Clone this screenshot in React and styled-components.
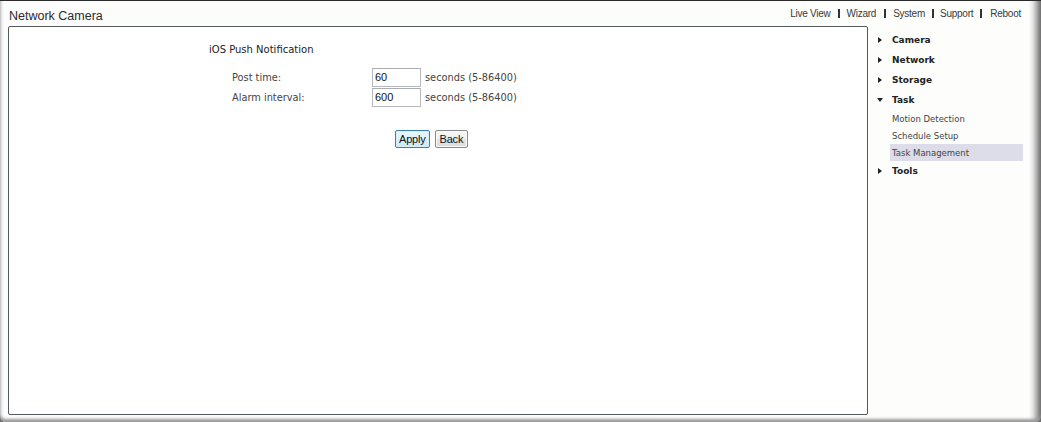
import React from 'react';
import styled, { createGlobalStyle } from 'styled-components';

const GlobalStyle = createGlobalStyle`
  html, body {
    margin: 0;
    padding: 0;
    background: #6e6e6e;
  }
`;

// outer frame with the shaded window edges
const Frame = styled.div`
  box-sizing: border-box;
  width: 1041px;
  height: 422px;
  border-top: 1px solid #2a2a2a;
  background: linear-gradient(to right, #c8c8c8 0, #efefef 2px, #fcfcfc 4px, #fdfefb 1029px, #e2e2e2 1033px, #a9a9a9 1037px, #6a6a6a 1041px);
  border-radius: 0 0 6px 6px;
  padding: 0 8px 0 8px;
  display: flex;
  flex-direction: column;
  box-shadow: inset 0 -4px 3px -1px #9a9a9a;
`;

const Header = styled.header`
  display: flex;
  justify-content: space-between;
  align-items: center;
  height: 25px;
`;

const Title = styled.div`
  font-family: 'Liberation Sans', Arial, sans-serif;
  font-size: 12.5px;
  color: #2b2b2b;
  padding-left: 1px;
  padding-top: 5px;
`;

const TopNav = styled.nav`
  display: flex;
  align-items: center;
  font-family: 'Liberation Sans', Arial, sans-serif;
  font-size: 10px;
  letter-spacing: -0.25px;
  color: #3a3a3a;
  padding-right: 12px;
  padding-bottom: 1px;
`;

const NavLink = styled.a`
  color: #3a3a3a;
  text-decoration: none;
`;

const Sep = styled.span`
  display: inline-block;
  width: 2px;
  height: 9px;
  background: #333;
  margin: 0 ${({ $r }) => $r || 7}px 0 ${({ $l }) => $l || 7}px;
`;

const Body = styled.div`
  display: flex;
  flex: 1;
`;

const Panel = styled.main`
  box-sizing: border-box;
  width: 860px;
  height: 389px;
  border: 1px solid #555a5c;
  border-radius: 2px;
  background: #fff;
  padding: 17px 0 0 200px;
`;

const SectionTitle = styled.div`
  font-family: 'DejaVu Sans', Verdana, sans-serif;
  font-size: 10px;
  color: #222;
  margin-bottom: 12px;
`;

const Row = styled.div`
  display: flex;
  align-items: center;
  height: 20px;
  font-family: 'DejaVu Sans', Verdana, sans-serif;
  font-size: 9.8px;
  color: #444;
`;

const Label = styled.span`
  width: 140px;
  padding-left: 23px;
`;

const Input = styled.input`
  box-sizing: border-box;
  width: 49px;
  height: 19px;
  border: 1px solid #b5b9bd;
  border-top-color: #a9acb0;
  font-family: 'Liberation Sans', Arial, sans-serif;
  font-size: 11px;
  color: #111;
  padding: 0 2px;
  margin: 0 4px 0 0;
  outline: none;
`;

const Unit = styled.span`
  color: #444;
`;

const Actions = styled.div`
  display: flex;
  gap: 5px;
  padding-left: 186px;
  margin-top: 23px;
`;

const Button = styled.button`
  box-sizing: border-box;
  height: 18px;
  padding: 0 ${({ $primary }) => ($primary ? 3 : 4)}px;
  font-family: 'Liberation Sans', Arial, sans-serif;
  font-size: 11px;
  letter-spacing: -0.2px;
  color: #111;
  border-radius: 2px;
  border: 1px solid ${({ $primary }) => ($primary ? '#3c7fb1' : '#8a8a8a')};
  background: ${({ $primary }) =>
    $primary
      ? 'linear-gradient(#eaf6fd, #cbeafc)'
      : 'linear-gradient(#f7f7f7, #efefef 50%, #e5e5e5 51%, #dcdcdc)'};
  box-shadow: inset 0 0 0 1px ${({ $primary }) => ($primary ? '#d7eefb' : '#fafafa')};
`;

const Sidebar = styled.aside`
  flex: 1;
  padding: 4px 0 0 10px;
  font-family: 'DejaVu Sans', Verdana, sans-serif;
`;

const MenuItem = styled.div`
  display: flex;
  align-items: center;
  height: 20px;
  font-size: 9px;
  font-weight: bold;
  color: #222;
`;

const Arrow = styled.span`
  display: inline-block;
  width: 0;
  height: 0;
  margin-right: 10px;
  ${({ $open }) =>
    $open
      ? `border-left: 3px solid transparent;
         border-right: 3px solid transparent;
         border-top: 4px solid #222;
         margin-left: -1px;
         margin-right: 9px;`
      : `border-top: 3px solid transparent;
         border-bottom: 3px solid transparent;
         border-left: 4px solid #222;`}
`;

const SubItem = styled.div`
  display: flex;
  align-items: center;
  height: 17px;
  margin-left: 12px;
  margin-right: 10px;
  padding-left: 2px;
  font-size: 8.5px;
  color: #444;
  background: ${({ $active }) => ($active ? '#dcdde9' : 'transparent')};
`;

const menu = ['Camera', 'Network', 'Storage'];
const tasks = ['Motion Detection', 'Schedule Setup', 'Task Management'];

export default function App() {
  return (
    <>
      <GlobalStyle />
      <Frame>
        <Header>
          <Title>Network Camera</Title>
          <TopNav>
            <NavLink>Live View</NavLink>
            <Sep />
            <NavLink>Wizard</NavLink>
            <Sep $l={8} />
            <NavLink>System</NavLink>
            <Sep $r={6} />
            <NavLink>Support</NavLink>
            <Sep $r={8} />
            <NavLink>Reboot</NavLink>
          </TopNav>
        </Header>
        <Body>
          <Panel>
            <SectionTitle>iOS Push Notification</SectionTitle>
            <Row>
              <Label>Post time:</Label>
              <Input defaultValue="60" />
              <Unit>seconds (5-86400)</Unit>
            </Row>
            <Row>
              <Label>Alarm interval:</Label>
              <Input defaultValue="600" />
              <Unit>seconds (5-86400)</Unit>
            </Row>
            <Actions>
              <Button $primary>Apply</Button>
              <Button>Back</Button>
            </Actions>
          </Panel>
          <Sidebar>
            {menu.map((m) => (
              <MenuItem key={m}>
                <Arrow />
                {m}
              </MenuItem>
            ))}
            <MenuItem>
              <Arrow $open />
              Task
            </MenuItem>
            {tasks.map((t) => (
              <SubItem key={t} $active={t === 'Task Management'}>
                {t}
              </SubItem>
            ))}
            <MenuItem>
              <Arrow />
              Tools
            </MenuItem>
          </Sidebar>
        </Body>
      </Frame>
    </>
  );
}
